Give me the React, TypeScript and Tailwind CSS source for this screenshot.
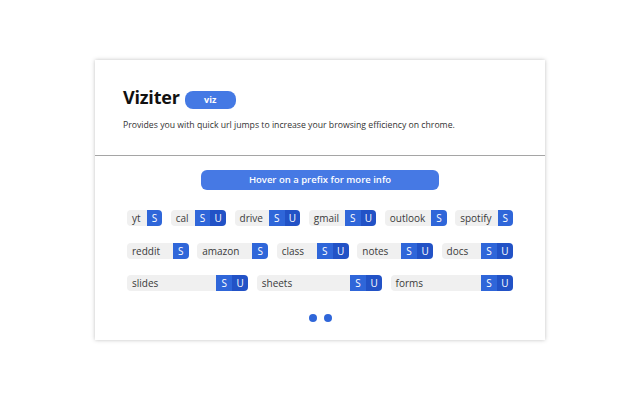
type Prefix = { name: string; u?: boolean };

const rows: Prefix[][] = [
  [
    { name: "yt" },
    { name: "cal", u: true },
    { name: "drive", u: true },
    { name: "gmail", u: true },
    { name: "outlook" },
    { name: "spotify" },
  ],
  [
    { name: "reddit" },
    { name: "amazon" },
    { name: "class", u: true },
    { name: "notes", u: true },
    { name: "docs", u: true },
  ],
  [
    { name: "slides", u: true },
    { name: "sheets", u: true },
    { name: "forms", u: true },
  ],
];

function Chip({ p }: { p: Prefix }) {
  return (
    <div className="grow flex h-4 rounded-[4px] overflow-hidden text-[10px] leading-4">
      <span className="grow bg-[#f0f0f0] text-[#3a3a3a] pl-[5px] pr-[6px]">{p.name}</span>
      <span className="w-4 text-center bg-[#2f66d9] text-white">S</span>
      {p.u && <span className="w-4 text-center bg-[#2252c6] text-white">U</span>}
    </div>
  );
}

export default function App() {
  return (
    <div
      className="h-screen w-full bg-white flex items-center justify-center"
      style={{ fontFamily: '"Open Sans", "Liberation Sans", sans-serif' }}
    >
      <div className="w-[450px] h-[280px] bg-white shadow-[0_0_4px_rgba(0,0,0,0.25)] flex flex-col">
        <div className="h-[96px] border-b border-[#a5a5a5] pl-[28px] pt-[25px]">
          <div className="flex items-center">
            <h1 className="text-[18px] leading-6 font-bold tracking-[-0.2px] text-[#111]">Viziter</h1>
            <span className="ml-[5px] mt-[5px] w-[51px] h-[18px] rounded-[8px] bg-[#4479e4] text-white text-[9px] font-bold flex items-center justify-center">
              viz
            </span>
          </div>
          <p className="mt-[10px] text-[8.7px] leading-3 text-[#333]">
            Provides you with quick url jumps to increase your browsing efficiency on chrome.
          </p>
        </div>
        <div className="px-[32px] pt-[14px] flex flex-col">
          <div className="self-center w-[238px] h-5 rounded-[6px] bg-[#4679e4] text-white text-[9.5px] font-semibold flex items-center justify-center">
            Hover on a prefix for more info
          </div>
          <div className="mt-5 flex flex-col gap-[16.5px]">
            {rows.map((row, i) => (
              <div key={i} className="flex gap-[8.5px]">
                {row.map((p) => (
                  <Chip key={p.name} p={p} />
                ))}
              </div>
            ))}
          </div>
          <div className="mt-[23px] flex justify-center gap-[7px]">
            <span className="w-2 h-2 rounded-full bg-[#2f66d9]" />
            <span className="w-2 h-2 rounded-full bg-[#2f66d9]" />
          </div>
        </div>
      </div>
    </div>
  );
}
